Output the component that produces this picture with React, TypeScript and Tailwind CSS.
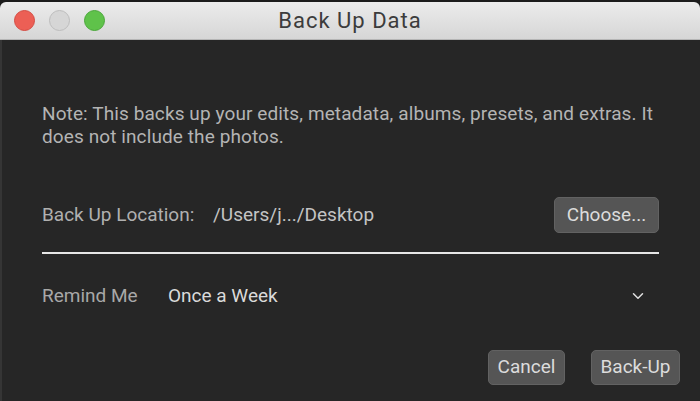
import { ChevronDown } from "lucide-react";

export default function App() {
  return (
    <div className="w-[700px] h-[401px] bg-[#1c1c1c] pt-[2px] overflow-hidden" style={{ fontFamily: "Roboto, 'Liberation Sans', sans-serif" }}>
      <div className="h-full flex flex-col rounded-t-[6px] overflow-hidden">
        {/* title bar */}
        <div className="relative h-[38px] shrink-0 bg-gradient-to-b from-[#ececec] to-[#d6d6d6] border-b border-[#b5b5b5] flex items-center">
          <div className="flex items-center gap-[14px] pl-[14px]">
            <span className="w-[21px] h-[21px] rounded-full bg-[#ec5f55] border border-[#d44c43]" />
            <span className="w-[21px] h-[21px] rounded-full bg-[#d6d6d6] border border-[#bdbdbd]" />
            <span className="w-[21px] h-[21px] rounded-full bg-[#5fc24a] border border-[#4aa73a]" />
          </div>
          <div className="absolute inset-0 flex items-center justify-center text-[22px] tracking-[1px] text-[#3c3c3c] pointer-events-none">
            Back Up Data
          </div>
        </div>

        {/* body */}
        <div className="flex-1 bg-[#262626] border-l-2 border-[#353535] pl-[40px] pr-[41px] pt-[62px] text-[19px]">
          <p className="text-[#b4b4b4] leading-[23px] tracking-[0.1px] -mr-[14px]">
            Note: This backs up your edits, metadata, albums, presets, and extras. It does not include the photos.
          </p>

          <div className="mt-[49px] flex items-center h-[36px]">
            <span className="text-[#b0b0b0] w-[171px]">Back Up Location:</span>
            <span className="text-[#c4c4c4] flex-1">/Users/j.../Desktop</span>
            <button className="h-[36px] w-[105px] rounded-[5px] bg-[#555555] border border-[#626262] text-[#dcdcdc]">
              Choose...
            </button>
          </div>

          <div className="mt-[19px] h-[2px] bg-[#e6e6e6]" />

          <div className="mt-[30px] flex items-center h-[24px]">
            <span className="text-[#a8a8a8] w-[126px]">Remind Me</span>
            <span className="text-[#dadada] flex-1">Once a Week</span>
            <ChevronDown className="w-[18px] h-[18px] text-[#e0e0e0] mr-[12px]" strokeWidth={2} />
          </div>

          <div className="mt-[42px] flex justify-end gap-[26px] -mr-[21px]">
            <button className="h-[35px] w-[77px] rounded-[5px] bg-[#555555] border border-[#626262] text-[#dcdcdc]">
              Cancel
            </button>
            <button className="h-[35px] w-[89px] rounded-[5px] bg-[#555555] border border-[#626262] text-[#dcdcdc]">
              Back-Up
            </button>
          </div>
        </div>
      </div>
    </div>
  );
}
